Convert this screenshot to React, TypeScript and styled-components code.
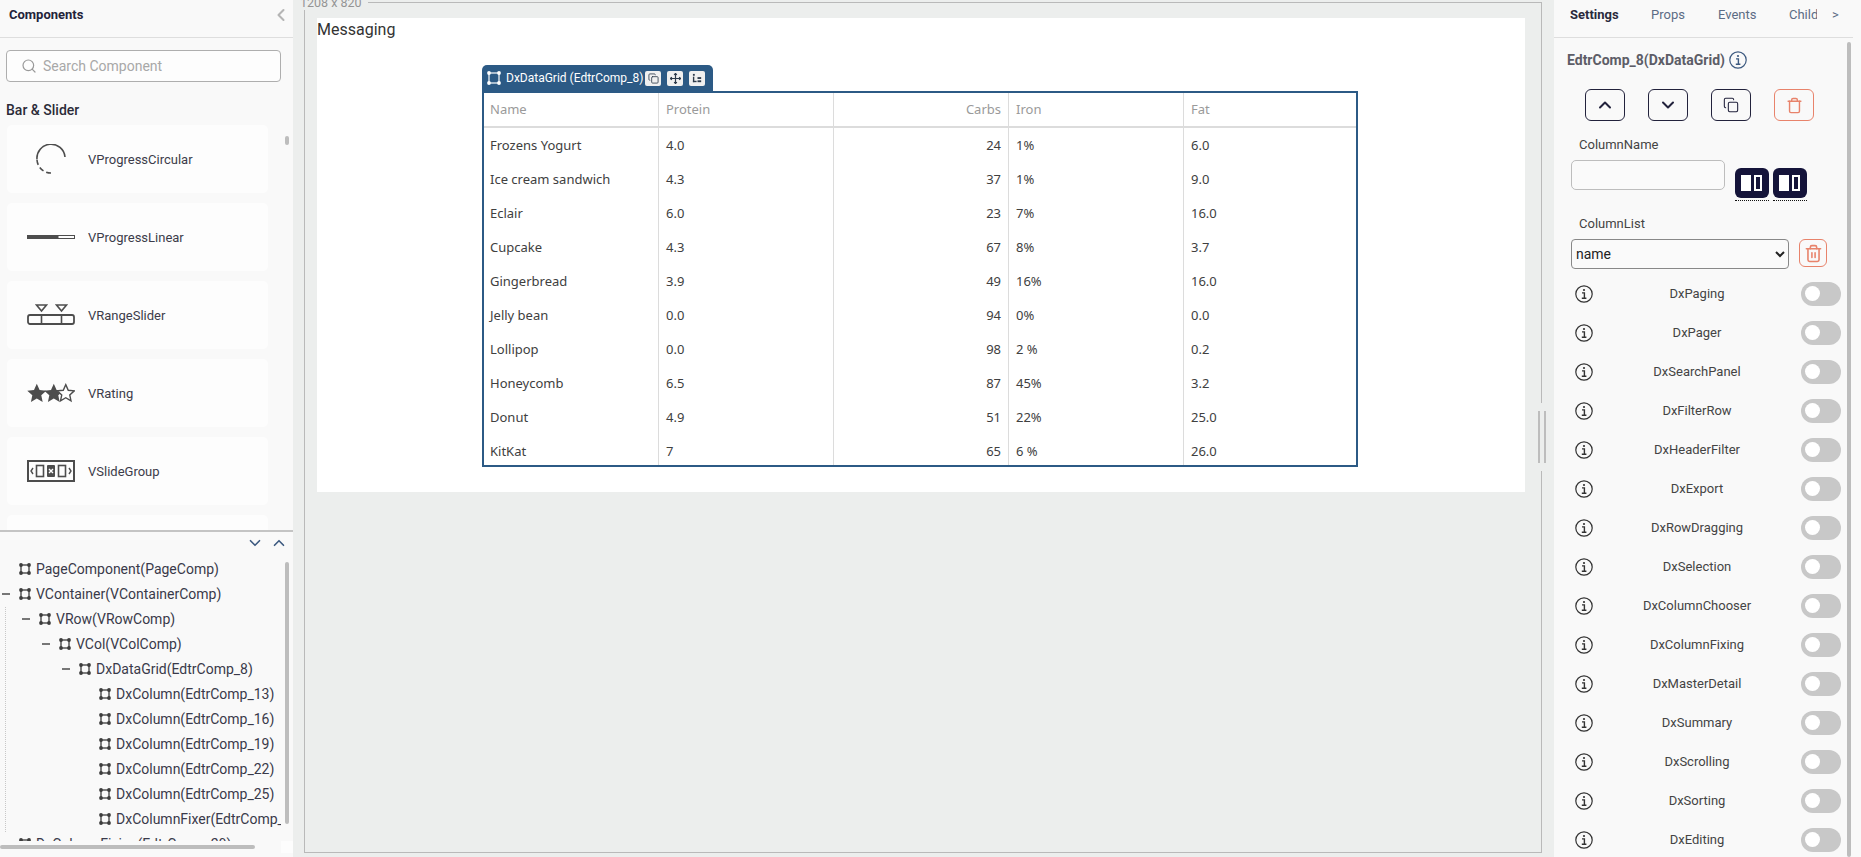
import React from "react";
import styled, { createGlobalStyle } from "styled-components";
import { ChevronDown, ChevronLeft, ChevronUp, Copy, Search, Trash, Trash2 } from "lucide-react";

const GlobalStyle = createGlobalStyle`
  html, body, #root {
    height: 100%;
    margin: 0;
  }

  body {
    overflow: hidden;
    font-family: 'Roboto', sans-serif;
    color: #333;
  }

  * {
    box-sizing: border-box;
  }
`;

const Page = styled.div`
  display: grid;
  grid-template-columns: 293px 1fr 307px;
  height: 857px;
  background-color: #eceeed;
`;

const LeftPanel = styled.aside`
  position: relative;
  display: flex;
  flex-direction: column;
  height: 857px;
  background-color: #f9f9f9;
  overflow: hidden;
`;

const PanelHeader = styled.div`
  display: flex;
  flex: none;
  align-items: center;
  justify-content: space-between;
  height: 38px;
  padding: 0 2px 8px 9px;
  border-bottom: 1px solid #dedede;
  font-size: 13px;
  font-weight: 700;
  color: #23233a;
`;

const Palette = styled.div`
  flex: none;
  position: relative;
  height: 492px;
  padding: 12px 0 0 6px;
  overflow: hidden;
`;

const SearchBox = styled.div`
  display: flex;
  align-items: center;
  gap: 6px;
  width: 275px;
  height: 32px;
  padding-left: 14px;
  border: 1px solid #aeaeae;
  border-radius: 4px;
  background-color: #fdfdfd;
  font-size: 14px;
  color: #a8a8a8;
`;

const SectionTitle = styled.div`
  height: 18px;
  margin: 19px 0 6px;
  font-size: 14px;
  font-weight: 500;
  line-height: 18px;
  color: #2b2b38;
`;

const CardList = styled.div`
  display: flex;
  flex-direction: column;
  gap: 10px;
  padding-left: 1px;
`;

const Card = styled.div`
  display: flex;
  flex: none;
  align-items: center;
  gap: 13px;
  width: 261px;
  height: 68px;
  padding-left: 20px;
  border-radius: 5px;
  background-color: #fdfdfd;
  font-size: 13px;
  color: #3c3c4a;
`;

const CardIcon = styled.svg`
  flex: none;
  width: 48px;
  height: 30px;
  color: #4d4d4d;
`;

const Thumb = styled.div<{ $top: number; $height: number }>`
  position: absolute;
  top: ${(p) => p.$top}px;
  left: 285px;
  width: 4px;
  height: ${(p) => p.$height}px;
  border-radius: 2px;
  background-color: #bdbdbd;
`;

const TreePanel = styled.div`
  position: relative;
  flex: 1;
  min-height: 0;
  border-top: 2px solid #c4c4c4;
`;

const TreeTools = styled.div`
  display: flex;
  justify-content: flex-end;
  gap: 6px;
  height: 24px;
  padding: 2px 5px 0 0;
  color: #3d5a80;
`;

const TreeClip = styled.div`
  width: 281px;
  height: 285px;
  overflow: hidden;
`;

const TreeRow = styled.div<{ $depth: number }>`
  display: flex;
  align-items: center;
  height: 25px;
  padding-left: ${(p) => p.$depth * 20 + 2}px;
  font-size: 14px;
  white-space: nowrap;
  color: #3a3a4a;
`;

const Toggle = styled.span<{ $on: boolean }>`
  flex: none;
  width: 8px;
  height: 2px;
  margin-right: 9px;
  background-color: ${(p) => (p.$on ? "#777" : "transparent")};
`;

const NodeSvg = styled.svg`
  flex: none;
  width: 12px;
  height: 12px;
  margin-right: 5px;
  color: #3c3c3c;
`;

const TreeGuide = styled.div`
  position: absolute;
  top: 75px;
  left: 5px;
  height: 225px;
  border-left: 1px dotted #c8c8c8;
`;

const HorizontalThumb = styled.div`
  position: absolute;
  left: 0;
  bottom: 8px;
  width: 255px;
  height: 4px;
  border-radius: 2px;
  background-color: #bdbdbd;
`;

const CornerBox = styled.div`
  position: absolute;
  left: 281px;
  bottom: 4px;
  width: 12px;
  height: 12px;
  background-color: #fdfdfd;
`;

const Center = styled.main`
  padding: 2px 12px 4px 11px;
`;

const Frame = styled.div`
  position: relative;
  height: 100%;
  padding: 15px 0 0 12px;
  border: 1px solid #b9b9b9;
`;

const SizeLabel = styled.div`
  position: absolute;
  top: -7px;
  left: -6px;
  padding: 0 6px 0 1px;
  background-color: #eceeed;
  font-size: 12.5px;
  line-height: 14px;
  color: #949494;
`;

const Canvas = styled.div`
  width: 1208px;
  height: 474px;
  background-color: #fff;
  overflow: hidden;
`;

const CanvasTitle = styled.div`
  height: 22px;
  font-size: 16px;
  line-height: 24px;
  color: #333;
`;

const GridWrap = styled.div`
  width: 876px;
  margin: 25px 0 0 165px;
`;

const GridTab = styled.div`
  display: flex;
  align-items: center;
  width: 231px;
  height: 26px;
  padding-left: 5px;
  border-radius: 5px 5px 0 0;
  background-color: #2c5a85;
  font-size: 12px;
  color: #fff;
  white-space: nowrap;
`;

const TabIcon = styled.svg`
  flex: none;
  width: 14px;
  height: 14px;
  margin-right: 5px;
  color: #fff;
`;

const TabActions = styled.div`
  display: flex;
  gap: 6px;
  margin-left: 2px;
`;

const TabButton = styled.span`
  display: flex;
  align-items: center;
  justify-content: center;
  width: 16px;
  height: 15px;
  border-radius: 2px;
  background-color: #f0f0f0;
  color: #2d3a4a;
`;

const GridBody = styled.div`
  height: 376px;
  border: 2px solid #2c5a85;
  background-color: #fff;
  overflow: hidden;
`;

const Table = styled.table`
  width: 872px;
  table-layout: fixed;
  border-collapse: separate;
  border-spacing: 0;
  font-family: 'Noto Sans', sans-serif;
  font-size: 13px;
`;

const Col = styled.col<{ $width: number }>`
  width: ${(p) => p.$width}px;
`;

const HeadCell = styled.th<{ $right?: boolean; $last?: boolean }>`
  height: 35px;
  padding: 0 7px 2px 7px;
  border-right: ${(p) => (p.$last ? "none" : "1px solid #dcdcdc")};
  border-bottom: 2px solid #dcdcdc;
  font-weight: 400;
  text-align: ${(p) => (p.$right ? "right" : "left")};
  color: #9a9a9a;

  &:first-child {
    padding-left: 6px;
  }
`;

const BodyCell = styled.td<{ $right?: boolean; $last?: boolean }>`
  height: 34px;
  padding: 0 7px;
  border-right: ${(p) => (p.$last ? "none" : "1px solid #dcdcdc")};
  text-align: ${(p) => (p.$right ? "right" : "left")};
  color: #404040;

  &:first-child {
    padding-left: 6px;
  }
`;

const ResizeHandle = styled.div`
  position: absolute;
  top: 408px;
  right: -5px;
  width: 8px;
  height: 52px;
  border-left: 2px solid #bdbdbd;
  border-right: 2px solid #bdbdbd;
  box-shadow: 0 -8px 0 #eceeed, 0 8px 0 #eceeed;
  background-color: #eceeed;
`;

const RightPanel = styled.aside`
  position: relative;
  height: 857px;
  background-color: #f9f9f9;
  overflow: hidden;
`;

const Tabs = styled.div`
  display: flex;
  align-items: center;
  height: 38px;
  width: 299px;
  padding: 0 0 8px 16px;
  border-bottom: 1px solid #dedede;
  font-size: 13px;
`;

const TabLabel = styled.div<{ $active?: boolean; $width: number }>`
  flex: none;
  width: ${(p) => p.$width}px;
  overflow: hidden;
  white-space: nowrap;
  font-weight: ${(p) => (p.$active ? 700 : 400)};
  color: ${(p) => (p.$active ? "#2a2a3c" : "#5c6c85")};
`;

const Arrow = styled.div`
  margin-left: 15px;
  color: #5c6c85;
`;

const Title = styled.div`
  display: flex;
  align-items: center;
  gap: 4px;
  height: 20px;
  margin: 12px 0 0 13px;
  font-size: 14px;
  font-weight: 700;
  color: #5d5d67;
`;

const ActionRow = styled.div`
  display: flex;
  gap: 23px;
  margin: 19px 0 0 31px;
`;

const ActionButton = styled.button<{ $danger?: boolean }>`
  display: flex;
  align-items: center;
  justify-content: center;
  width: 40px;
  height: 32px;
  padding: 0;
  border: 1px solid ${(p) => (p.$danger ? "#e8836b" : "#22223c")};
  border-radius: 6px;
  background-color: transparent;
  color: ${(p) => (p.$danger ? "#e8836b" : "#22223c")};
`;

const FieldLabel = styled.div<{ $top: number }>`
  height: 16px;
  margin: ${(p) => p.$top}px 0 0 25px;
  font-size: 13px;
  line-height: 16px;
  color: #444;
`;

const ColumnNameRow = styled.div`
  display: flex;
  gap: 10px;
  margin: 7px 0 0 17px;
`;

const TextInput = styled.input`
  width: 154px;
  height: 30px;
  border: 1px solid #bdbdbd;
  border-radius: 5px;
  background-color: #fafafa;
`;

const FixButtons = styled.div`
  display: flex;
  gap: 4px;
  margin-top: 8px;
`;

const FixButton = styled.div`
  width: 34px;
  height: 33px;
  padding-bottom: 2px;
  border-bottom: 1px dotted #111;
`;

const FixFace = styled.div`
  display: flex;
  align-items: center;
  justify-content: center;
  height: 30px;
  border-radius: 6px;
  background-color: #15143a;
`;

const SelectRow = styled.div`
  display: flex;
  gap: 10px;
  margin: 7px 0 0 17px;
`;

const Select = styled.select`
  width: 218px;
  height: 30px;
  padding-left: 0;
  border: 1px solid #888;
  border-radius: 4px;
  background-color: #fafafa;
  font-family: 'Roboto', sans-serif;
  font-size: 14px;
  color: #222;
`;

const SmallTrash = styled.div`
  display: flex;
  align-items: center;
  justify-content: center;
  width: 28px;
  height: 28px;
  border: 1px solid #e8836b;
  border-radius: 6px;
  color: #e8836b;
`;

const OptionList = styled.div`
  margin-top: 5px;
`;

const OptionRow = styled.div`
  display: flex;
  align-items: center;
  height: 39px;
  width: 287px;
  padding-left: 21px;
`;

const OptionInfo = styled.span`
  display: flex;
  flex: none;
  color: #333;
`;

const TitleInfo = styled.span`
  display: flex;
  color: #3d5a80;
`;

const OptionName = styled.div`
  flex: 1;
  font-size: 13px;
  text-align: center;
  color: #444;
`;

const Switch = styled.span`
  display: flex;
  flex: none;
  align-items: center;
  width: 40px;
  height: 24px;
  padding-left: 4px;
  border-radius: 12px;
  background-color: #c8c8c8;

  &::before {
    content: "";
    width: 15px;
    height: 15px;
    border-radius: 50%;
    background-color: #fff;
  }
`;

const RightThumb = styled.div`
  position: absolute;
  top: 42px;
  left: 293px;
  width: 4px;
  bottom: 0;
  border-radius: 2px;
  background-color: #bdbdbd;
`;

const NodeIcon = () => (
  <NodeSvg viewBox="0 0 12 12" fill="none">
    <rect x="2" y="2" width="8" height="8" stroke="currentColor" strokeWidth="1.3" />
    <circle cx="2" cy="2" r="1.9" fill="currentColor" />
    <circle cx="10" cy="2" r="1.9" fill="currentColor" />
    <circle cx="2" cy="10" r="1.9" fill="currentColor" />
    <circle cx="10" cy="10" r="1.9" fill="currentColor" />
  </NodeSvg>
);

const InfoIcon = ({ size }: { size: number }) => (
  <svg width={size} height={size} viewBox="0 0 18 18" fill="none" stroke="currentColor">
    <circle cx="9" cy="9" r="8.2" strokeWidth="1.2" />
    <circle cx="9" cy="5" r="1.1" fill="currentColor" stroke="none" />
    <path d="M7 7.9h2.4v5M6.8 13.2h4.6" strokeWidth="1.4" />
  </svg>
);

const star = "M7 0.5l2 4.5 4.8 0.5-3.6 3.2 1 4.8L7 11l-4.2 2.5 1-4.8L0.2 5.5 5 5z";

const cards: { name: string; icon: React.ReactNode }[] = [
  {
    name: "VProgressCircular",
    icon: (
      <>
        <path d="M10 15.5A14 14 0 0 1 38 13" fill="none" stroke="currentColor" strokeWidth="1.6" />
        <path d="M10 16a14 14 0 0 0 14 13" fill="none" stroke="currentColor" strokeWidth="1.6" strokeDasharray="5 3" />
      </>
    ),
  },
  {
    name: "VProgressLinear",
    icon: (
      <>
        <rect x="0" y="13" width="31" height="4" fill="currentColor" />
        <rect x="31" y="13.5" width="16.5" height="3" fill="none" stroke="currentColor" strokeWidth="1" />
      </>
    ),
  },
  {
    name: "VRangeSlider",
    icon: (
      <>
        <path d="M9.5 5h10l-5 6zM29.5 5h10l-5 6z" fill="none" stroke="currentColor" strokeWidth="1.6" />
        <rect x="1" y="15" width="46" height="9" rx="2" fill="none" stroke="currentColor" strokeWidth="1.8" />
        <path d="M14.5 15v9M34.5 15v9" stroke="currentColor" strokeWidth="1.6" />
      </>
    ),
  },
  {
    name: "VRating",
    icon: (
      <>
        <g transform="translate(0 5) scale(1.4)"><path d={star} fill="currentColor" /></g>
        <g transform="translate(17 5) scale(1.4)"><path d={star} fill="currentColor" /></g>
        <g transform="translate(30 6) scale(1.25)"><path d={star} fill="#fff" stroke="currentColor" strokeWidth="1.1" /></g>
      </>
    ),
  },
  {
    name: "VSlideGroup",
    icon: (
      <>
        <rect x="1" y="5" width="46" height="20" fill="none" stroke="currentColor" strokeWidth="2" />
        <rect x="9.5" y="9.5" width="7" height="11" fill="none" stroke="currentColor" strokeWidth="1.6" />
        <rect x="20" y="9" width="8" height="12" rx="1" fill="currentColor" />
        <path d="M22 13l4 4M26 13l-4 4" stroke="#fff" strokeWidth="1.4" />
        <rect x="31.5" y="9.5" width="7" height="11" fill="none" stroke="currentColor" strokeWidth="1.6" />
        <path d="M6 12l-2 3 2 3M42 12l2 3-2 3" fill="none" stroke="currentColor" strokeWidth="1.4" />
      </>
    ),
  },
  { name: "VSpacer", icon: null },
];

const treeRows: { label: string; depth: number; open?: boolean }[] = [
  { label: "PageComponent(PageComp)", depth: 0 },
  { label: "VContainer(VContainerComp)", depth: 0, open: true },
  { label: "VRow(VRowComp)", depth: 1, open: true },
  { label: "VCol(VColComp)", depth: 2, open: true },
  { label: "DxDataGrid(EdtrComp_8)", depth: 3, open: true },
  { label: "DxColumn(EdtrComp_13)", depth: 4 },
  { label: "DxColumn(EdtrComp_16)", depth: 4 },
  { label: "DxColumn(EdtrComp_19)", depth: 4 },
  { label: "DxColumn(EdtrComp_22)", depth: 4 },
  { label: "DxColumn(EdtrComp_25)", depth: 4 },
  { label: "DxColumnFixer(EdtrComp_28)", depth: 4 },
  { label: "DxColumnFixing(EdtrComp_29)", depth: 0 },
];

const columns = [
  { name: "Name", width: 175 },
  { name: "Protein", width: 175 },
  { name: "Carbs", width: 175, right: true },
  { name: "Iron", width: 175 },
  { name: "Fat", width: 172, last: true },
];

const rows = [
  ["Frozens Yogurt", "4.0", "24", "1%", "6.0"],
  ["Ice cream sandwich", "4.3", "37", "1%", "9.0"],
  ["Eclair", "6.0", "23", "7%", "16.0"],
  ["Cupcake", "4.3", "67", "8%", "3.7"],
  ["Gingerbread", "3.9", "49", "16%", "16.0"],
  ["Jelly bean", "0.0", "94", "0%", "0.0"],
  ["Lollipop", "0.0", "98", "2 %", "0.2"],
  ["Honeycomb", "6.5", "87", "45%", "3.2"],
  ["Donut", "4.9", "51", "22%", "25.0"],
  ["KitKat", "7", "65", "6 %", "26.0"],
];

const options = [
  "DxPaging",
  "DxPager",
  "DxSearchPanel",
  "DxFilterRow",
  "DxHeaderFilter",
  "DxExport",
  "DxRowDragging",
  "DxSelection",
  "DxColumnChooser",
  "DxColumnFixing",
  "DxMasterDetail",
  "DxSummary",
  "DxScrolling",
  "DxSorting",
  "DxEditing",
];

const ColumnsGlyph = () => (
  <svg width="24" height="18" viewBox="0 0 24 18">
    <rect x="1" y="1" width="10" height="16" fill="#fff" />
    <rect x="15" y="2" width="6" height="14" fill="none" stroke="#fff" strokeWidth="2" />
  </svg>
);

function App() {
  return (
    <Page>
      <GlobalStyle />

      <LeftPanel>
        <PanelHeader>
          Components
          <ChevronLeft size={20} color="#b5b5b5" strokeWidth={2.5} />
        </PanelHeader>

        <Palette>
          <SearchBox>
            <Search size={16} strokeWidth={1.8} color="#999" />
            Search Component
          </SearchBox>
          <SectionTitle>Bar &amp; Slider</SectionTitle>
          <CardList>
            {cards.map((card) => (
              <Card key={card.name}>
                <CardIcon viewBox="0 0 48 30">{card.icon}</CardIcon>
                {card.icon ? card.name : null}
              </Card>
            ))}
          </CardList>
          <Thumb $top={98} $height={9} />
        </Palette>

        <TreePanel>
          <TreeTools>
            <ChevronDown size={18} strokeWidth={2.2} />
            <ChevronUp size={18} strokeWidth={2.2} />
          </TreeTools>
          <TreeClip>
            {treeRows.map((row) => (
              <TreeRow key={row.label} $depth={row.depth}>
                <Toggle $on={!!row.open} />
                <NodeIcon />
                {row.label}
              </TreeRow>
            ))}
          </TreeClip>
          <TreeGuide />
          <Thumb $top={30} $height={262} />
          <HorizontalThumb />
          <CornerBox />
        </TreePanel>
      </LeftPanel>

      <Center>
        <Frame>
          <SizeLabel>1208 x 820</SizeLabel>
          <Canvas>
            <CanvasTitle>Messaging</CanvasTitle>
            <GridWrap>
              <GridTab>
                <TabIcon viewBox="0 0 14 14" fill="none">
                  <rect x="2" y="2" width="10" height="10" stroke="currentColor" strokeWidth="1.2" />
                  <circle cx="2" cy="2" r="1.9" fill="currentColor" />
                  <circle cx="12" cy="2" r="1.9" fill="currentColor" />
                  <circle cx="2" cy="12" r="1.9" fill="currentColor" />
                  <circle cx="12" cy="12" r="1.9" fill="currentColor" />
                </TabIcon>
                DxDataGrid (EdtrComp_8)
                <TabActions>
                  <TabButton>
                    <Copy size={11} strokeWidth={1.8} />
                  </TabButton>
                  <TabButton>
                    <svg width="11" height="11" viewBox="0 0 12 12" fill="none" stroke="currentColor" strokeWidth="1.3">
                      <path d="M6 0.5v11M0.5 6h11M4.5 2L6 0.5 7.5 2M4.5 10L6 11.5 7.5 10M2 4.5L0.5 6 2 7.5M10 4.5L11.5 6 10 7.5" />
                    </svg>
                  </TabButton>
                  <TabButton>
                    <svg width="11" height="11" viewBox="0 0 12 12" fill="currentColor">
                      <rect x="1" y="1" width="2" height="2" />
                      <rect x="1" y="4" width="1.5" height="6" />
                      <rect x="1" y="8.5" width="4" height="1.5" />
                      <rect x="6" y="4.5" width="4" height="2" />
                      <rect x="6" y="8" width="4" height="2" />
                    </svg>
                  </TabButton>
                </TabActions>
              </GridTab>
              <GridBody>
                <Table>
                  <colgroup>
                    {columns.map((col) => (
                      <Col key={col.name} $width={col.width} />
                    ))}
                  </colgroup>
                  <thead>
                    <tr>
                      {columns.map((col) => (
                        <HeadCell key={col.name} $right={col.right} $last={col.last}>
                          {col.name}
                        </HeadCell>
                      ))}
                    </tr>
                  </thead>
                  <tbody>
                    {rows.map((row) => (
                      <tr key={row[0]}>
                        {row.map((cell, i) => (
                          <BodyCell key={i} $right={columns[i].right} $last={columns[i].last}>
                            {cell}
                          </BodyCell>
                        ))}
                      </tr>
                    ))}
                  </tbody>
                </Table>
              </GridBody>
            </GridWrap>
          </Canvas>
          <ResizeHandle />
        </Frame>
      </Center>

      <RightPanel>
        <Tabs>
          <TabLabel $active $width={81}>Settings</TabLabel>
          <TabLabel $width={67}>Props</TabLabel>
          <TabLabel $width={71}>Events</TabLabel>
          <TabLabel $width={28}>Child</TabLabel>
          <Arrow>&gt;</Arrow>
        </Tabs>

        <Title>
          EdtrComp_8(DxDataGrid)
          <TitleInfo>
            <InfoIcon size={18} />
          </TitleInfo>
        </Title>

        <ActionRow>
          <ActionButton>
            <ChevronUp size={20} strokeWidth={2.4} />
          </ActionButton>
          <ActionButton>
            <ChevronDown size={20} strokeWidth={2.4} />
          </ActionButton>
          <ActionButton>
            <Copy size={16} strokeWidth={1.6} />
          </ActionButton>
          <ActionButton $danger>
            <Trash size={17} strokeWidth={2} />
          </ActionButton>
        </ActionRow>

        <FieldLabel $top={16}>ColumnName</FieldLabel>
        <ColumnNameRow>
          <TextInput type="text" />
          <FixButtons>
            <FixButton><FixFace><ColumnsGlyph /></FixFace></FixButton>
            <FixButton><FixFace><ColumnsGlyph /></FixFace></FixButton>
          </FixButtons>
        </ColumnNameRow>

        <FieldLabel $top={15}>ColumnList</FieldLabel>
        <SelectRow>
          <Select defaultValue="name">
            <option value="name">name</option>
          </Select>
          <SmallTrash>
            <Trash2 size={19} strokeWidth={2} />
          </SmallTrash>
        </SelectRow>

        <OptionList>
          {options.map((name) => (
            <OptionRow key={name}>
              <OptionInfo>
                <InfoIcon size={18} />
              </OptionInfo>
              <OptionName>{name}</OptionName>
              <Switch />
            </OptionRow>
          ))}
        </OptionList>

        <RightThumb />
      </RightPanel>
    </Page>
  );
}

export default App;
